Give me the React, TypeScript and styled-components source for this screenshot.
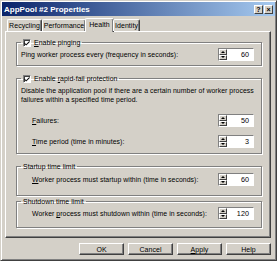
import styled, { createGlobalStyle } from 'styled-components';

const GlobalStyle = createGlobalStyle`
  html, body {
    margin: 0;
    padding: 0;
    background: #d4d0c8;
  }
  body {
    font-family: 'Liberation Sans', Arial, sans-serif;
  }
  * {
    box-sizing: border-box;
  }
`;

const Window = styled.div`
  width: 277px;
  height: 261px;
  display: flex;
  flex-direction: column;
  background: #d4d0c8;
  border: 1px solid;
  border-color: #d4d0c8 #404040 #404040 #d4d0c8;
  box-shadow: inset 1px 1px 0 #fff, inset -1px -1px 0 #808080;
  font-size: 6.9px;
  letter-spacing: 0.05px;
  color: #000;
  white-space: nowrap;
`;

const TitleBar = styled.div`
  height: 14px;
  margin: 1px 1px 0;
  display: flex;
  align-items: center;
  justify-content: space-between;
  padding: 0 2px 0 2px;
  background: linear-gradient(to right, #0a246a, #a6caf0);
  color: #fff;
  font-weight: 700;
  font-size: 8px;
  letter-spacing: 0;
`;

const TitleButtons = styled.div`
  display: flex;
  gap: 1px;
`;

const TitleButton = styled.div`
  width: 9px;
  height: 9px;
  background: #d4d0c8;
  border: 1px solid;
  border-color: #fff #404040 #404040 #fff;
  color: #000;
  font-size: 7px;
  font-weight: 700;
  line-height: 7px;
  text-align: center;
`;

const TabRow = styled.div`
  display: flex;
  padding: 0 0 0 6px;
  margin-top: 2px;
  height: 13px;
  align-items: flex-end;
  position: relative;
  z-index: 1;
`;

const Tab = styled.div<{ $active?: boolean; $w: number }>`
  width: ${(p) => p.$w}px;
  height: ${(p) => (p.$active ? 14 : 12)}px;
  margin: 0 ${(p) => (p.$active ? -1 : 0)}px ${(p) => (p.$active ? -1 : 0)}px;
  display: flex;
  align-items: center;
  justify-content: center;
  background: #d4d0c8;
  border-top: 1px solid #fff;
  border-left: 1px solid #fff;
  border-right: 1px solid #404040;
  box-shadow: inset -1px 0 0 #808080;
  border-radius: 2px 2px 0 0;
  font-size: 7px;
  padding-bottom: ${(p) => (p.$active ? 2 : 0)}px;
`;

const Panel = styled.div`
  margin: 0 5px 0 4px;
  height: 207px;
  border: 1px solid;
  border-color: #fff #404040 #404040 #fff;
  box-shadow: inset -1px -1px 0 #808080;
  padding: 6px 8px 0 10px;
  display: flex;
  flex-direction: column;
`;

const Group = styled.fieldset<{ $h: number; $mt: number }>`
  margin: ${(p) => p.$mt}px 0 0;
  height: ${(p) => p.$h}px;
  padding: 0 7px 0 4px;
  border: 1px solid #808080;
  box-shadow: 1px 1px 0 #fff, inset 1px 1px 0 #fff;
  display: flex;
  flex-direction: column;
  min-width: 0;
`;

const Legend = styled.legend`
  padding: 0 2px;
  margin-left: 0;
  line-height: 9px;
  height: 9px;
  display: flex;
  align-items: center;
  gap: 3px;
`;

const CheckBox = styled.span`
  width: 8px;
  height: 8px;
  background: #fff;
  border: 1px solid;
  border-color: #808080 #fff #fff #808080;
  box-shadow: inset 1px 1px 0 #404040;
  display: flex;
  align-items: center;
  justify-content: center;
`;

const Row = styled.div<{ $indent?: number; $mt?: number }>`
  display: flex;
  align-items: center;
  justify-content: space-between;
  height: 13px;
  margin-top: ${(p) => p.$mt ?? 0}px;
  padding-left: ${(p) => p.$indent ?? 0}px;
`;

const Text = styled.div<{ $mt?: number }>`
  line-height: 9px;
  margin-top: ${(p) => p.$mt ?? 0}px;
`;

const U = styled.span`
  text-decoration: underline;
`;

const Spinner = styled.div`
  display: flex;
  height: 13px;
  width: 36px;
  flex-shrink: 0;
  border: 1px solid;
  border-color: #808080 #fff #fff #808080;
`;

const SpinArrows = styled.div`
  width: 8px;
  display: flex;
  flex-direction: column;
`;

const SpinButton = styled.div`
  flex: 1;
  background: #d4d0c8;
  border: 1px solid;
  border-color: #fff #404040 #404040 #fff;
  display: flex;
  align-items: center;
  justify-content: center;
`;

const SpinField = styled.div`
  flex: 1;
  background: #fff;
  text-align: right;
  padding-right: 4px;
  line-height: 11px;
  font-size: 7.2px;
`;

const ButtonBar = styled.div`
  display: flex;
  justify-content: flex-end;
  gap: 4px;
  padding: 5px 5px 0 0;
`;

const Button = styled.div`
  width: 45px;
  height: 12px;
  background: #d4d0c8;
  border: 1px solid;
  border-color: #fff #404040 #404040 #fff;
  box-shadow: inset -1px -1px 0 #808080;
  display: flex;
  align-items: center;
  justify-content: center;
  font-size: 7px;
`;

const Arrow = ({ up }: { up?: boolean }) => (
  <svg width="4" height="2" viewBox="0 0 4 2">
    <polygon points={up ? '0,2 4,2 2,0' : '0,0 4,0 2,2'} fill="#000" />
  </svg>
);

const Spin = ({ value }: { value: string }) => (
  <Spinner>
    <SpinArrows>
      <SpinButton>
        <Arrow up />
      </SpinButton>
      <SpinButton>
        <Arrow />
      </SpinButton>
    </SpinArrows>
    <SpinField>{value}</SpinField>
  </Spinner>
);

const Check = () => (
  <CheckBox>
    <svg width="6" height="6" viewBox="0 0 7 7">
      <path d="M0.5 3 L2.5 5 L6.5 1 L6.5 2.5 L2.5 6.5 L0.5 4.5 Z" fill="#000" />
    </svg>
  </CheckBox>
);

function App() {
  return (
    <>
      <GlobalStyle />
      <Window>
        <TitleBar>
          <span>AppPool #2 Properties</span>
          <TitleButtons>
            <TitleButton>?</TitleButton>
            <TitleButton>×</TitleButton>
          </TitleButtons>
        </TitleBar>
        <TabRow>
          <Tab $w={35}>Recycling</Tab>
          <Tab $w={44}>Performance</Tab>
          <Tab $w={29} $active>
            Health
          </Tab>
          <Tab $w={27}>Identity</Tab>
        </TabRow>
        <Panel>
          <Group $h={28} $mt={0}>
            <Legend>
              <Check />
              <span>
                <U>E</U>nable pinging
              </span>
            </Legend>
            <Row $mt={1}>
              <span>Ping worker process every (frequency in seconds):</span>
              <Spin value="60" />
            </Row>
          </Group>
          <Group $h={80} $mt={8}>
            <Legend>
              <Check />
              <span>
                Enable <U>r</U>apid-fail protection
              </span>
            </Legend>
            <Text $mt={3}>
              Disable the application pool if there are a certain number of worker process
              <br />
              failures within a specified time period.
            </Text>
            <Row $indent={11} $mt={10}>
              <span>
                <U>F</U>ailures:
              </span>
              <Spin value="50" />
            </Row>
            <Row $indent={11} $mt={8}>
              <span>
                <U>T</U>ime period (time in minutes):
              </span>
              <Spin value="3" />
            </Row>
          </Group>
          <Group $h={34} $mt={8}>
            <Legend>Startup time limit</Legend>
            <Row $indent={11} $mt={2}>
              <span>
                <U>W</U>orker process must startup within (time in seconds):
              </span>
              <Spin value="60" />
            </Row>
          </Group>
          <Group $h={31} $mt={1}>
            <Legend>Shutdown time limit</Legend>
            <Row $indent={11} $mt={1}>
              <span>
                Worker <U>p</U>rocess must shutdown within (time in seconds):
              </span>
              <Spin value="120" />
            </Row>
          </Group>
        </Panel>
        <ButtonBar>
          <Button>OK</Button>
          <Button>Cancel</Button>
          <Button>
            <span>
              <U>A</U>pply
            </span>
          </Button>
          <Button>Help</Button>
        </ButtonBar>
      </Window>
    </>
  );
}

export default App;
